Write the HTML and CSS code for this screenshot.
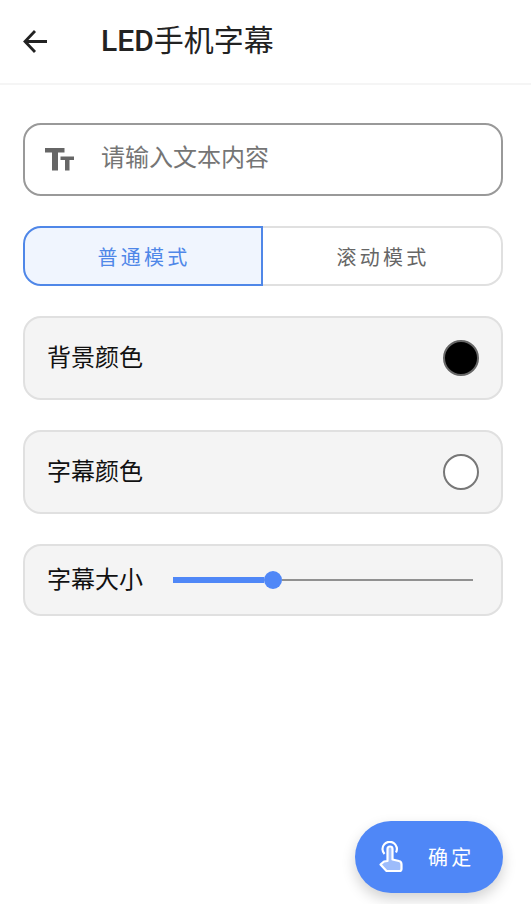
FILE: index.html
```html
<!DOCTYPE html>
<html lang="zh-CN">
<head>
<meta charset="utf-8">
<title>LED手机字幕</title>
<link rel="stylesheet" href="styles.css">
</head>
<body>
<div class="app">
  <header class="bar">
    <svg class="back" width="28" height="28" viewBox="0 0 28 28"><path d="M26 14.500H4.500M14 4 4 14.500 14 25" fill="none" stroke="#222" stroke-width="2.800"/></svg>
    <h1 class="title"><span class="latin">LED</span>手机字幕</h1>
  </header>
  <main class="content">
    <div class="input">
      <svg class="tt" width="30" height="24" viewBox="0 0 30 24"><path d="M0 0H19.500V4.500H13V22.500H7V4.500H0Z M15.500 8.500H29V12H24.500V22.500H20V12H15.500Z" fill="#666"/></svg>
      <span class="placeholder">请输入文本内容</span>
    </div>
    <div class="tabs">
      <div class="tab tab-on">普通模式</div>
      <div class="tab tab-off">滚动模式</div>
    </div>
    <div class="row row-color">
      <span class="label">背景颜色</span>
      <span class="swatch swatch-black"></span>
    </div>
    <div class="row row-color">
      <span class="label">字幕颜色</span>
      <span class="swatch swatch-white"></span>
    </div>
    <div class="row row-size">
      <span class="label">字幕大小</span>
      <div class="slider">
        <span class="fill"></span>
        <span class="thumb"></span>
        <span class="rest"></span>
      </div>
    </div>
  </main>
  <div class="fab-wrap">
    <button class="fab">
      <svg class="hand" width="26" height="32" viewBox="0 0 26 32">
        <path d="M9.500 8V20L6 20.500 2.500 23.500 8.500 30H21.500Q23.500 30 23.500 28V23.500Q23.500 20.500 21 20L14.500 18.500V8Q14.500 5.500 12 5.500T9.500 8Z" fill="#9dbcfb" stroke="#fff" stroke-width="2.200" stroke-linejoin="round"/>
        <path d="M6.500 13A7.200 7.200 0 1 1 18 11.500" fill="none" stroke="#fff" stroke-width="2.200"/>
      </svg>
      <span class="fab-text">确定</span>
    </button>
  </div>
</div>
</body>
</html>
```
FILE: styles.css
```css
* { box-sizing: border-box; }
html, body { margin: 0; padding: 0; background: #fff; }
body { font-family: Roboto, "Noto Sans CJK SC", sans-serif; }
.app { width: 531px; height: 904px; display: flex; flex-direction: column; overflow: hidden; }
.bar { height: 85px; flex: none; display: flex; align-items: center; padding: 0 0 2px 21px; border-bottom: 2px solid #f5f5f5; }
.back { flex: none; }
.title { margin: 0 0 0 52px; font-size: 30px; font-weight: 400; color: #222; line-height: 40px; }
.latin { font-weight: 500; }
.content { flex: 1; display: flex; flex-direction: column; padding: 38px 28px 0 23px; }
.input { height: 73px; display: flex; align-items: center; border: 2px solid #999; border-radius: 18px; padding: 0 0 0 20px; }
.tt { flex: none; }
.placeholder { margin-left: 26px; padding-bottom: 8px; font-size: 24px; color: #757575; }
.tabs { display: flex; height: 60px; margin-top: 30px; }
.tab { width: 240px; display: flex; align-items: center; justify-content: center; padding-left: 2px; font-size: 20px; letter-spacing: 3.300px; border: 2px solid #e0e0e0; }
.tab-on { background: #f0f5fe; border-color: #4f87e8; color: #4f87e8; border-radius: 18px 0 0 18px; }
.tab-off { flex: 1; width: auto; color: #666; border-left: 0; border-radius: 0 18px 18px 0; }
.row { display: flex; align-items: center; background: #f4f4f4; border: 2px solid #e0e0e0; border-radius: 18px; padding: 0 22px; margin-top: 30px; }
.row-color { height: 84px; justify-content: space-between; }
.row-size { height: 72px; padding-right: 28px; }
.label { padding-bottom: 5px; font-size: 24px; color: #111; }
.swatch { width: 36px; height: 36px; border-radius: 50%; border: 2px solid #666; }
.swatch-black { background: #000; }
.swatch-white { background: #fff; border-color: #777; }
.slider { flex: 1; display: flex; align-items: center; margin-left: 30px; }
.fill { width: 91px; height: 6px; background: #4f87f7; }
.thumb { width: 18px; height: 18px; border-radius: 50%; background: #4f87f7; flex: none; }
.rest { flex: 1; height: 2px; background: #909090; }
.fab-wrap { display: flex; justify-content: flex-end; padding: 0 28px 11px 0; }
.fab { width: 148px; height: 72px; border: 0; border-radius: 36px; background: #4f87f7; display: flex; align-items: center; padding: 0 0 0 23px; box-shadow: 0 6px 14px rgba(0,0,0,.18); font-family: inherit; }
.hand { flex: none; }
.fab-text { margin-left: 24px; padding-bottom: 2px; font-size: 20px; color: #fff; letter-spacing: 3.300px; }
```
